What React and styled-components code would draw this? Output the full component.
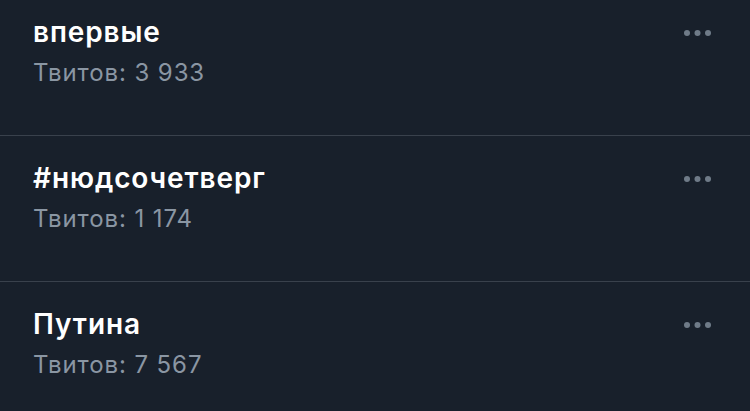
import React from 'react'
import styled, { createGlobalStyle } from 'styled-components'

const GlobalStyle = createGlobalStyle`
  html, body {
    margin: 0;
    padding: 0;
    background: #18202b;
    overflow: hidden;
  }
  body {
    font-family: Inter, "Noto Sans", "Liberation Sans", sans-serif;
    -webkit-font-smoothing: antialiased;
  }
`

const Page = styled.div`
  width: 750px;
  height: 411px;
  background: #18202b;
  overflow: hidden;
`

const List = styled.ul`
  list-style: none;
  margin: -11px 0 0 0;
  padding: 0;
`

const Row = styled.li`
  display: flex;
  align-items: flex-start;
  justify-content: space-between;
  height: 146px;
  box-sizing: border-box;
  padding: 25px 36px 0 33px;
  border-top: 1px solid #39414c;
`

const Info = styled.div`
  display: flex;
  flex-direction: column;
`

const Title = styled.div`
  color: #ffffff;
  font-size: 28px;
  line-height: 34px;
  font-weight: 600;
  letter-spacing: 0.9px;
`

const Count = styled.div`
  color: #8a96a3;
  font-size: 24px;
  line-height: 28px;
  margin-top: 10px;
  letter-spacing: 0.9px;
`

const More = styled.button`
  background: none;
  border: none;
  padding: 0;
  margin-top: 15px;
  display: flex;
  cursor: pointer;
`

const trends = [
  { name: 'впервые', tweets: '3 933' },
  { name: '#нюдсочетверг', tweets: '1 174' },
  { name: 'Путина', tweets: '7 567' }
]

function MoreIcon () {
  return (
    <svg width="30" height="6" viewBox="0 0 30 6">
      <circle cx="3" cy="3" r="3" fill="#6f7b88" />
      <circle cx="13.5" cy="3" r="3" fill="#6f7b88" />
      <circle cx="24" cy="3" r="3" fill="#6f7b88" />
    </svg>
  )
}

function App () {
  return (
    <>
      <GlobalStyle />
      <Page>
        <List>
          {trends.map(t => (
            <Row key={t.name}>
              <Info>
                <Title>{t.name}</Title>
                <Count>Твитов: {t.tweets}</Count>
              </Info>
              <More aria-label="Ещё">
                <MoreIcon />
              </More>
            </Row>
          ))}
        </List>
      </Page>
    </>
  )
}

export default App
